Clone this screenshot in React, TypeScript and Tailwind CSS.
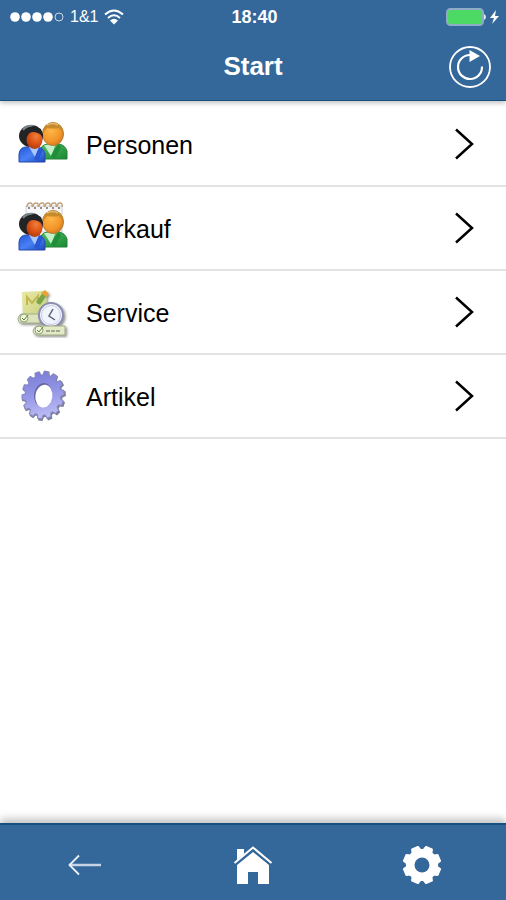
import type { ReactNode } from 'react';

interface MenuEntry {
  label: string;
  icon: ReactNode;
}

/** Outline of a toothed wheel, listed as SVG polygon points. */
function wheelPoints(teeth: number, cx: number, cy: number, rx: number, ry: number, depth: number) {
  const profile = [
    [-0.36, 1 - depth],
    [-0.22, 1],
    [0.22, 1],
    [0.36, 1 - depth],
  ];
  const points: string[] = [];
  for (let i = 0; i < teeth; i++) {
    for (const [offset, scale] of profile) {
      const angle = ((i + offset) / teeth) * Math.PI * 2 - Math.PI / 2;
      points.push(`${cx + Math.cos(angle) * rx * scale},${cy + Math.sin(angle) * ry * scale}`);
    }
  }
  return points.join(' ');
}

function PeopleShapes({ id }: { id: string }) {
  return (
    <>
      <defs>
        <radialGradient id={`${id}-dark`} cx="0.6" cy="0.3" r="0.8">
          <stop offset="0" stopColor="#f0803c" />
          <stop offset="0.5" stopColor="#dc5416" />
          <stop offset="1" stopColor="#a83208" />
        </radialGradient>
        <radialGradient id={`${id}-light`} cx="0.4" cy="0.35" r="0.8">
          <stop offset="0" stopColor="#ffb648" />
          <stop offset="0.6" stopColor="#f2952a" />
          <stop offset="1" stopColor="#c86a10" />
        </radialGradient>
        <linearGradient id={`${id}-blue`} x1="0" y1="0" x2="1" y2="1">
          <stop offset="0" stopColor="#2456d8" />
          <stop offset="0.5" stopColor="#4a80f4" />
          <stop offset="1" stopColor="#1c48c0" />
        </linearGradient>
        <linearGradient id={`${id}-green`} x1="0" y1="0" x2="1" y2="1">
          <stop offset="0" stopColor="#52bd6a" />
          <stop offset="1" stopColor="#168a30" />
        </linearGradient>
      </defs>
      <path d="M26 43V32q2-4 7-4h11q6 1 8 7v8z" fill={`url(#${id}-green)`} stroke="#258038" />
      <path d="M29 29l7 11 5-12z" fill="#c4efca" />
      <path d="M36 40l7-12 3 3-6 12z" fill="#208d38" />
      <ellipse cx="38" cy="18" rx="10.5" ry="11.5" fill={`url(#${id}-light)`} stroke="#b08038" />
      <path d="M28 17q0-10 10-10t10 10l-4-5q-6 1-12 0z" fill="#c58a2c" />
      <path d="M32 9q6-3 11 0" fill="none" stroke="#e3bb72" strokeWidth="1.5" />
      <path d="M4 46v-8q1-7 7-7h12q6 1 7 7v8z" fill={`url(#${id}-blue)`} stroke="#2349a8" />
      <path d="M14 31l6 10 5-10z" fill="#a9c8ff" />
      <path d="M19 43l5-12 4 3-5 11z" fill="#2858d4" />
      <ellipse cx="16" cy="20" rx="12" ry="11" fill="#222426" />
      <path d="M8 14q4-5 11-4" fill="none" stroke="#80878c" strokeWidth="2" />
      <ellipse cx="19.5" cy="24" rx="8" ry="9" fill={`url(#${id}-dark)`} />
      <path d="M11 18q8-5 17 2l-2-7-8-3-6 3z" fill="#222426" />
    </>
  );
}

function PeopleIcon() {
  return (
    <svg viewBox="0 0 56 56" className="size-14" aria-hidden="true">
      <PeopleShapes id="people" />
    </svg>
  );
}

function SalesIcon() {
  return (
    <svg viewBox="0 0 56 56" className="size-14" aria-hidden="true">
      <path d="M11 6h36v26H11z" fill="#f6f7fb" stroke="#ccd0da" />
      {[14, 20, 26, 32, 38, 44].map((x) => (
        <g key={x}>
          <path d={`M${x - 2} 7q0-4 3-4t2 4`} fill="none" stroke="#c0a47c" strokeWidth="1.5" />
          <circle cx={x} cy="8" r="1" fill="#7d6750" />
        </g>
      ))}
      <g transform="translate(0 4)">
        <PeopleShapes id="sales" />
      </g>
    </svg>
  );
}

function ServiceIcon() {
  return (
    <svg viewBox="0 0 56 56" className="size-14" aria-hidden="true">
      <defs>
        <linearGradient id="note" x1="0" y1="0" x2="1" y2="1">
          <stop offset="0" stopColor="#e9e9a4" />
          <stop offset="1" stopColor="#c3cd80" />
        </linearGradient>
        <filter id="service-shadow" x="-20%" y="-20%" width="150%" height="150%">
          <feDropShadow dx="1.5" dy="1.5" stdDeviation="1" floodColor="#44483c" floodOpacity="0.6" />
        </filter>
      </defs>
      <g filter="url(#service-shadow)">
        <path d="M7 8l24-1 1 27-24 3z" fill="url(#note)" />
        <path d="M12 21v-8l5 6 6-7v8" fill="none" stroke="#c2b850" strokeWidth="2" />
        <path d="M21 18l8-11 4 3-8 11z" fill="#78a548" />
        <path d="M26 9l4-3 4 4-3 3z" fill="#e7a234" />
        <path d="M6 30h20v9H6q-3-1-3-4t3-5z" fill="#dce4bd" stroke="#a3ad88" />
        <circle cx="9" cy="34" r="4" fill="#f0f4dc" stroke="#8fa274" />
        <path d="M7 34l2 2 4-5" fill="none" stroke="#608040" />
      </g>
      <g filter="url(#service-shadow)">
        <circle cx="36" cy="31" r="12" fill="#f2f4fd" stroke="#8c8eb0" strokeWidth="2" />
        <circle cx="36" cy="31" r="9.5" fill="none" stroke="#c8cce8" />
        <path d="M38 25l-4 7 6 4" fill="none" stroke="#5b6078" strokeWidth="1.5" />
      </g>
      <g filter="url(#service-shadow)">
        <path d="M22 42h28v9H22q-4-1-4-4t4-5z" fill="#e2e9c6" stroke="#a3ad8c" />
        <circle cx="24" cy="46" r="4" fill="#f1f5df" stroke="#8fa276" />
        <path d="M22 46l2 2 4-5" fill="none" stroke="#608040" />
        <path d="M31 47h15" stroke="#8b947b" strokeWidth="1.5" strokeDasharray="4 1" />
      </g>
    </svg>
  );
}

function ArticleIcon() {
  return (
    <svg viewBox="0 0 56 56" className="size-14" aria-hidden="true">
      <defs>
        <linearGradient id="wheel" x1="0" y1="0" x2="0.3" y2="1">
          <stop offset="0" stopColor="#7778d4" />
          <stop offset="0.5" stopColor="#9092e4" />
          <stop offset="1" stopColor="#b9b9f4" />
        </linearGradient>
      </defs>
      <g transform="rotate(8 28 27)" strokeLinejoin="round">
        <polygon points={wheelPoints(14, 29, 28, 22, 25, 0.15)} fill="#7c7e94" />
        <polygon
          points={wheelPoints(14, 28, 27, 21, 24, 0.15)}
          fill="url(#wheel)"
          stroke="#8588be"
        />
        <ellipse cx="28" cy="27" rx="9" ry="12" fill="#6668a4" />
        <ellipse cx="29" cy="28" rx="8.5" ry="11.5" fill="#fff" />
      </g>
    </svg>
  );
}

const ENTRIES: MenuEntry[] = [
  { label: 'Personen', icon: <PeopleIcon /> },
  { label: 'Verkauf', icon: <SalesIcon /> },
  { label: 'Service', icon: <ServiceIcon /> },
  { label: 'Artikel', icon: <ArticleIcon /> },
];

function StatusBar() {
  return (
    <div className="grid h-[33px] grid-cols-[1fr_auto_1fr] items-center pr-[7px] pl-2.5 text-white">
      <div className="flex items-center gap-1.5">
        <svg viewBox="0 0 54 12" className="h-3 w-[54px]" role="img" aria-label="Signal">
          {[5, 16, 27, 38].map((x) => (
            <circle key={x} cx={x} cy="6" r="4.8" fill="currentColor" />
          ))}
          <circle cx="49" cy="6" r="4" fill="none" stroke="#c9d8e8" />
        </svg>
        <span className="text-base">1&amp;1</span>
        <svg viewBox="0 0 20 16" className="h-4 w-5" role="img" aria-label="WLAN">
          <g fill="none" stroke="currentColor" strokeWidth="2">
            <path d="M1 5.5Q10-2.5 19 5.5" />
            <path d="M4 9Q10 3.5 16 9" />
          </g>
          <path d="M6 11.5Q10 8 14 11.5L10 15.5z" fill="currentColor" />
        </svg>
      </div>
      <span className="text-lg font-bold">18:40</span>
      <div className="flex items-center justify-end gap-1">
        <svg viewBox="0 0 40 18" className="h-[18px] w-10" role="img" aria-label="Akku">
          <rect x="1" y="1" width="36" height="16" rx="3.5" fill="#4cd964" stroke="#8eabc7" strokeWidth="2" />
          <path d="M38 6q2 1 2 3t-2 3z" fill="#dfe9f2" />
        </svg>
        <svg viewBox="0 0 9 16" className="h-4 w-[9px]" aria-hidden="true">
          <path d="M6 1L0 9h4l-2 6 7-8H5z" fill="currentColor" />
        </svg>
      </div>
    </div>
  );
}

function TitleBar() {
  return (
    <div className="grid h-[67px] grid-cols-[1fr_auto_1fr] items-center px-3.5">
      <h1 className="col-start-2 text-[26px] font-bold text-white">Start</h1>
      <button type="button" aria-label="Aktualisieren" className="justify-self-end text-white">
        <svg viewBox="0 0 44 44" className="size-11">
          <circle cx="22" cy="22" r="20" fill="none" stroke="currentColor" strokeWidth="1.8" />
          <path d="M34 21.5A12 12 0 1 1 22 10" fill="none" stroke="currentColor" strokeWidth="2.2" />
          <path d="M21.500 5L32 11 21.500 17z" fill="currentColor" />
        </svg>
      </button>
    </div>
  );
}

function MenuRow({ label, icon }: MenuEntry) {
  return (
    <li className="border-b-2 border-[#e2e2e2]">
      <a href={`#${label.toLowerCase()}`} className="flex h-[82px] items-center pr-8 pl-[15px]">
        {icon}
        <span className="ml-[15px] flex-1 pt-[3px] text-[25px] text-black">{label}</span>
        <svg viewBox="0 0 20 34" className="h-[34px] w-5" aria-hidden="true">
          <path d="M2 2.5L18 17 2 31.5" fill="none" stroke="#000" strokeWidth="2.5" />
        </svg>
      </a>
    </li>
  );
}

function BottomBar() {
  return (
    <nav className="grid h-[77px] grid-cols-3 items-center border-t-2 border-[#15507f] bg-[#34679a] pt-1 text-white shadow-[0_-4px_8px_rgba(0,0,0,0.25)]">
      <button type="button" aria-label="Zurück" className="justify-self-center">
        <svg viewBox="0 0 40 40" className="size-10">
          <path d="M5 20h32" fill="none" stroke="#c5d4e7" strokeWidth="2.5" />
          <path d="M15 10.5L5.500 20 15 29.500" fill="none" stroke="#e9f1f8" strokeWidth="1.8" />
        </svg>
      </button>
      <button type="button" aria-label="Startseite" className="justify-self-center">
        <svg viewBox="0 0 40 40" className="size-10">
          <path d="M4 20L20 7l16 13v19H25V27H15v12H4z" fill="currentColor" />
          <path d="M1 18.500L20 3l19 15.500" fill="none" stroke="#34679a" strokeWidth="5" />
          <path d="M4 4h7v5l-7 6z" fill="currentColor" />
          <path d="M1.500 18L20 2.500 38.500 18" fill="none" stroke="currentColor" strokeWidth="2" />
        </svg>
      </button>
      <button type="button" aria-label="Einstellungen" className="justify-self-center">
        <svg viewBox="0 0 40 40" className="size-10">
          <g transform="rotate(22.5 20 20)">
            <polygon
              points={wheelPoints(8, 20, 20, 18.5, 18.5, 0.18)}
              fill="currentColor"
              stroke="currentColor"
              strokeWidth="2"
              strokeLinejoin="round"
            />
          </g>
          <circle cx="20" cy="20" r="7.5" fill="#34679a" />
        </svg>
      </button>
    </nav>
  );
}

export default function App() {
  return (
    <div className="flex min-h-screen flex-col bg-white font-['Liberation_Sans',Arial,sans-serif]">
      <header className="z-10 border-b border-[#15507f] bg-[#34679a] shadow-[0_2px_5px_rgba(0,0,0,0.25)]">
        <StatusBar />
        <TitleBar />
      </header>
      <main className="flex-1 pt-0.5">
        <ul>
          {ENTRIES.map((entry) => (
            <MenuRow key={entry.label} {...entry} />
          ))}
        </ul>
      </main>
      <BottomBar />
    </div>
  );
}
